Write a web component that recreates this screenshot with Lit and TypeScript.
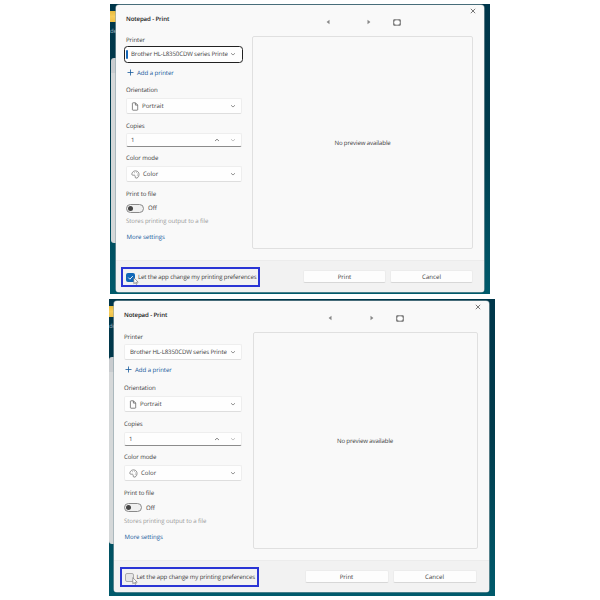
import { LitElement, html, svg, css } from "lit";
import { customElement, property } from "lit/decorators.js";
import { classMap } from "lit/directives/class-map.js";

const chevron = (up = false) => html`<svg class="chev" viewBox="0 0 6 6" width="6" height="6">
  <path d=${up ? "M1 4L3 2.2L5 4" : "M1 2.2L3 4L5 2.2"} fill="none" stroke="currentColor" stroke-width=".7" />
</svg>`;

const pageIcon = html`<svg viewBox="0 0 8 9" width="8" height="9">
  <path d="M1.4 1.4Q1.4.8 2 .8H4.5L6.7 3V7.6Q6.7 8.2 6.1 8.2H2Q1.4 8.2 1.4 7.6ZM4.4.9V3.1H6.6" fill="none" stroke="#555" stroke-width=".7" />
</svg>`;

const paletteIcon = html`<svg viewBox="0 0 9 9" width="9" height="9">
  <path d="M.9 3.6C1.3 1.8 3 .8 4.8.9C7 1 8.2 2.8 8 4.9C7.8 7 6.4 8.3 5 8.1C3.7 7.9 4.5 6.4 4 5.6C3.3 4.6 2.2 5.7 1.3 5.1C.8 4.7.8 4.1.9 3.6Z" fill="none" stroke="#666" stroke-width=".7" />
  ${svg`<g fill="#777"><circle cx="3.3" cy="2.8" r=".45"/><circle cx="5.3" cy="2.6" r=".45"/><circle cx="6.4" cy="4" r=".45"/><circle cx="6.2" cy="5.8" r=".45"/></g>`}
</svg>`;

@customElement("print-window")
class PrintWindow extends LitElement {
  @property({ type: Boolean }) accepted = false;

  static styles = css`
    :host { display: block; font-family: "Open Sans", "Noto Sans", sans-serif; font-size: 6.1px; letter-spacing: -.13px; line-height: 10px; color: #404040; text-rendering: geometricPrecision; }
    * { box-sizing: border-box; }
    svg { display: block; flex: none; }
    .desktop { position: relative; overflow: hidden; display: flex; background: linear-gradient(#00364a, #013b4c 45%, #005a6b); }
    .first { width: 380px; height: 290px; padding: 1px 0 0 6px; --fields: 115.5px;
      --rows: 20px 21px 16.5px 15.5px 18px 18px 18px 15px 17px 18px 17.5px 13.5px 14px 15.5px; }
    .second { width: 386px; height: 297px; padding: 2px 0 0 5px; --fields: 118px;
      --rows: 20px 21.5px 17px 15.5px 18.5px 18.5px 18px 15.5px 17px 18.5px 17.5px 14px 14px 16px; }
    .behind { position: absolute; left: 0; top: 7px; width: 12px; height: 236px; color: #9ab0b8; font-size: 6px; }
    .folder { height: 11px; background: linear-gradient(#e6b93c, #f7cd5a 50%, #eebf45); }
    .name { height: 40px; padding-top: 4px; }
    .first .name { height: 36px; }
    .app { height: 185px; margin-left: 1px; border-radius: 3px; background: linear-gradient(#c9cccf 0 15px, #d6d8d9 15px 30px, #d5d8d9 30px); }
    .second .behind { height: 245px; }
    .second .app { height: 187px; margin-left: 0; }
    .dialog { position: relative; display: flex; flex-direction: column; border-radius: 3px; background: #f9f9f9; overflow: hidden; box-shadow: 0 0 0 .6px #90a4aa; }
    .first .dialog { width: 368px; height: 287px; }
    .second .dialog { width: 374.5px; height: 291px; }
    .main { flex: 1; display: flex; }
    .form { display: grid; grid-template-columns: minmax(0, 1fr); grid-template-rows: var(--rows); align-content: start; align-items: end; width: var(--fields); margin-left: 10px; flex: none; }
    .text { white-space: nowrap; height: 11px; line-height: 10px; letter-spacing: -.09px; }
    .title { color: #222; font-weight: 600; height: 12px; line-height: 11px; letter-spacing: -.12px; }
    .box { display: flex; align-items: center; height: 16px; padding: 0 5px 0 4px; border: 1px solid #eeeeee; border-bottom-color: #dedede; border-radius: 2px; background: #fefefe; white-space: nowrap; }
    .box svg { margin-right: 3px; }
    .box svg:first-child + span { letter-spacing: 0; }
    .box .chev { margin: 0 0 0 auto; color: #666; }
    .clip { overflow: hidden; }
    .second .focus { padding-left: 5px; }
    .first .focus { border: 1.5px solid #222; border-radius: 3.5px; height: 17px; width: 118.5px; margin-left: -2px; padding: 0 6px 0 1px; }
    .bar { width: 2px; height: 9px; border-radius: 1px; background: #1667b7; margin-right: 3px; }
    .number { height: 14px; border-bottom-color: #8c8c8c; }
    .number .chev { color: #555; }
    .number .chev + .chev { margin-left: 10px; color: #aaa; }
    .link { color: #185a9c; letter-spacing: -.05px; }
    .add { display: flex; align-items: center; gap: 3px; height: 11px; padding-left: 1px; }
    .switchrow { display: flex; align-items: center; gap: 4px; height: 9.5px; letter-spacing: 0; }
    .switch { width: 18px; height: 9px; border: 1px solid #8a8a8a; border-radius: 5px; background: #f0f0f0; display: flex; align-items: center; padding-left: 1px; }
    .knob { width: 5px; height: 5px; border-radius: 50%; background: #444; }
    .hint { color: #9b9b9b; }
    .more { padding-left: .6px; }
    .right { flex: 1; display: flex; flex-direction: column; padding: 0 11px 11px 10.5px; }
    .tools { display: flex; align-items: center; height: 31px; padding: 3px 0 0 74px; }
    .second .tools { padding-left: 75px; }
    .tools svg + svg { margin-left: 37px; }
    .tools svg + svg + svg { margin-left: 22px; }
    .second .tools svg + svg { margin-left: 38px; }
    .second .tools svg + svg + svg { margin-left: 22.5px; }
    .preview { flex: 1; display: flex; align-items: center; justify-content: center; border: 1px solid #e0e0e0; border-radius: 2px; padding-top: 1px; }
    .close { position: absolute; right: 8px; top: 3px; }
    .footer { height: 32px; display: flex; align-items: center; background: #f2f2f2; border-top: 1px solid #ececec; padding: 0 11px 0 5px; }
    .second .footer { padding-left: 5.5px; }
    .mark { position: relative; flex: none; width: 139px; height: 20px; border: 2px solid #2a35d5; display: flex; align-items: center; gap: 3px; padding-left: 3px; white-space: nowrap; margin-top: 1px; }
    .mark > span:nth-child(2) { padding-bottom: 1px; }
    .check { width: 9px; height: 9px; border-radius: 2px; background: #e6e6e6; border: 1px solid #aaa; flex: none; }
    .accepted .check { background: #0f67b8; border: 0; }
    .cursor { position: absolute; left: 10px; top: 8px; }
    .push { width: 83px; height: 13.5px; line-height: 12px; text-align: center; background: #fdfdfd; border: 1px solid #ececec; border-bottom-color: #d7d7d7; border-radius: 2px; letter-spacing: 0; }
    .first .mark + .push { margin-left: 43px; }
    .second .mark + .push { margin-left: 46px; }
    .push + .push { margin-left: 4px; }
    .second .push { width: 84px; }
  `;

  render() {
    const on = this.accepted;
    return html`<div class=${classMap({ desktop: true, first: on, second: !on, accepted: on })}>
      <div class="behind"><div class="folder"></div><div class="name">de</div><div class="app"></div></div>
      <div class="dialog">
        <svg class="close" viewBox="0 0 6 6" width="6" height="6"><path d="M.8.8L5.2 5.2M5.2.8L.8 5.2" stroke="#555" stroke-width=".8" /></svg>
        <div class="main">
          <div class="form">
            <div class="text title">Notepad - Print</div>
            <div class="text">Printer</div>
            <div class="box focus">${on ? html`<span class="bar"></span>` : ""}<span class="clip">Brother HL-L8350CDW series Printe</span>${chevron()}</div>
            <div class="add link"><svg viewBox="0 0 7 7" width="7" height="7"><path d="M3.5.5V6.5M.5 3.5H6.5" stroke="currentColor" stroke-width=".8" /></svg><span>Add a printer</span></div>
            <div class="text">Orientation</div>
            <div class="box">${pageIcon}<span>Portrait</span>${chevron()}</div>
            <div class="text">Copies</div>
            <div class="box number"><span>1</span>${chevron(true)}${chevron()}</div>
            <div class="text">Color mode</div>
            <div class="box">${paletteIcon}<span>Color</span>${chevron()}</div>
            <div class="text">Print to file</div>
            <div class="switchrow"><span class="switch"><span class="knob"></span></span><span>Off</span></div>
            <div class="text hint">Stores printing output to a file</div>
            <div class="text link more">More settings</div>
          </div>
          <div class="right">
            <div class="tools">
              <svg viewBox="0 0 4 6" width="4" height="6"><path d="M3.5.8V5.2L.6 3Z" fill="#888" /></svg>
              <svg viewBox="0 0 4 6" width="4" height="6"><path d="M.5.8V5.2L3.4 3Z" fill="#888" /></svg>
              <svg viewBox="0 0 8 7" width="8" height="7"><rect x=".7" y=".8" width="6.6" height="5.4" rx=".6" fill="#fff" stroke="#777" /><path d="M1 2.4V1H2.5M5.5 1H7V2.4M7 4.6V6H5.5M2.5 6H1V4.6" fill="none" stroke="#777" stroke-width="1.2" /></svg>
            </div>
            <div class="preview">No preview available</div>
          </div>
        </div>
        <div class="footer">
          <div class="mark">
            <span class="check">${on ? html`<svg viewBox="0 0 9 9" width="9" height="9"><path d="M2.3 4.6L3.9 6.2L6.8 3.1" fill="none" stroke="#fff" stroke-width=".9" /></svg>` : ""}</span>
            <span>Let the app change my printing preferences</span>
            <svg class="cursor" viewBox="0 0 6 8" width="6" height="8"><path d="M.8.7V6.7L2.3 5.5L3.2 7.4L4.1 7L3.3 5.2H5.2Z" fill="#fff" stroke="#666" stroke-width=".6" /></svg>
          </div>
          <div class="push">Print</div>
          <div class="push">Cancel</div>
        </div>
      </div>
    </div>`;
  }
}

@customElement("app-root")
class AppRoot extends LitElement {
  static styles = css`
    :host { display: block; width: 600px; height: 600px; background: #fff; overflow: hidden; }
    .sheet { display: flex; flex-direction: column; align-items: flex-start; gap: 5px; padding: 4px 0 0 109px; }
    .upper { margin-left: 1px; }
  `;
  render() {
    return html`<div class="sheet">
      <print-window class="upper" accepted></print-window>
      <print-window></print-window>
    </div>`;
  }
}
